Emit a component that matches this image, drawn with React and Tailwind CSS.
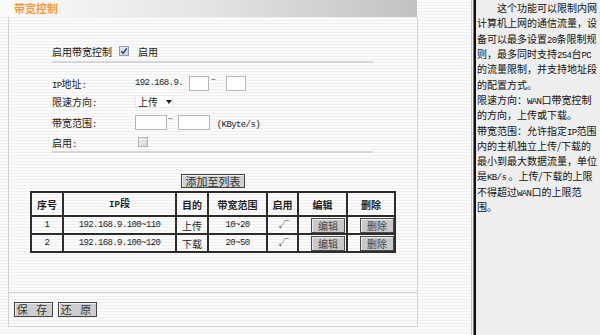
const M = ({ children }) => (
  <span className="font-['Liberation_Mono',monospace] text-[9px] leading-none tracking-[-0.6px]">{children}</span>
);

const stripes =
  'bg-[repeating-linear-gradient(180deg,#fbfbfb_0px,#fbfbfb_2px,#efefef_2px,#efefef_3px)]';

function Box({ wide }) {
  return (
    <div
      className={`h-[15px] border border-[#b4b4b4] bg-white ${wide ? 'w-[32px]' : 'w-[20px]'}`}
    />
  );
}

function Tilde() {
  return (
    <span className="self-start font-['Liberation_Mono',monospace] text-[8px] leading-[8px] text-[#333]">~</span>
  );
}

function CheckBox({ checked }) {
  if (checked) {
    return (
      <div className="flex h-[10px] w-[10px] items-center justify-center border border-[#8c9db5] bg-gradient-to-br from-[#eef2f8] to-[#c3cfe0]">
        <svg width="8" height="8" viewBox="0 0 8 8">
          <path d="M1.2 4.2 L3.2 6.2 L6.8 1.4" fill="none" stroke="#25337a" strokeWidth="1.4" />
        </svg>
      </div>
    );
  }
  return <div className="h-[10px] w-[10px] border border-[#b0b0b0] bg-gradient-to-br from-[#f2f2f2] to-[#d6d6d6]" />;
}

function SmallBtn({ children }) {
  return (
    <div className="flex h-[15px] w-[34px] items-center justify-center border border-[#4a4a4a] bg-[#c9c9c9] text-[10px] text-[#444] shadow-[inset_1px_1px_0_#ececec]">
      {children}
    </div>
  );
}

const COLS = ['w-[30px]', 'w-[113px] border-l-2', 'w-[32px] border-l-2', 'w-[59px] border-l-2', 'w-[31px] border-l-2', 'w-[49px] border-l-2', 'w-[48px] border-l-2'];

const ROWS = [
  { no: '1', ip: '192.168.9.100~110', dir: '上传', bw: '10~20' },
  { no: '2', ip: '192.168.9.100~120', dir: '下载', bw: '20~50' },
];

function RuleTable() {
  const head = ['序号', 'IP段', '目的', '带宽范围', '启用', '编辑', '删除'];
  return (
    <div className="w-[366px] border-2 border-[#2c2c2c] text-[10px] text-[#222]">
      <div className="flex h-[22px]">
        {head.map((h, i) => (
          <div key={h} className={`flex items-center justify-center border-[#2c2c2c] font-bold ${COLS[i]}`}>
            {h === 'IP段' ? (
              <span>
                <span className="font-['Liberation_Mono',monospace] text-[9px] font-bold">IP</span>段
              </span>
            ) : (
              h
            )}
          </div>
        ))}
      </div>
      {ROWS.map((r) => (
        <div key={r.no} className="flex h-[18px] border-t-2 border-[#2c2c2c]">
          <div className={`flex items-center justify-center border-[#2c2c2c] ${COLS[0]}`}><M>{r.no}</M></div>
          <div className={`flex items-center justify-center border-[#2c2c2c] ${COLS[1]}`}><M>{r.ip}</M></div>
          <div className={`flex items-center justify-center border-[#2c2c2c] ${COLS[2]}`}>{r.dir}</div>
          <div className={`flex items-center justify-center border-[#2c2c2c] ${COLS[3]}`}><M>{r.bw}</M></div>
          <div className={`flex items-center justify-center border-[#2c2c2c] text-[9px] italic text-[#444] ${COLS[4]}`}>√</div>
          <div className={`flex items-center justify-end pr-[1px] border-[#2c2c2c] ${COLS[5]}`}><SmallBtn>编辑</SmallBtn></div>
          <div className={`flex items-center justify-end pr-[0px] border-[#2c2c2c] ${COLS[6]}`}><SmallBtn>删除</SmallBtn></div>
        </div>
      ))}
    </div>
  );
}

function Label({ children }) {
  return <div className="w-[83px] shrink-0">{children}</div>;
}

const HELP = [
  '\u3000\u3000这个功能可以限制内网',
  '计算机上网的通信流量，设',
  <>备可以最多设置<M>20</M>条限制规</>,
  <>则，最多同时支持<M>254</M>台<M>PC</M></>,
  '的流量限制，并支持地址段',
  '的配置方式。',
  <>限速方向：<M>WAN</M>口带宽控制</>,
  '的方向，上传或下载。',
  <>带宽范围：允许指定<M>IP</M>范围</>,
  '内的主机独立上传/下载的',
  '最小到最大数据流量，单位',
  <>是<M>KB/s</M> 。上传/下载的上限</>,
  <>不得超过<M>WAN</M>口的上限范</>,
  '围。',
];

export default function App() {
  return (
    <div className="flex h-[335px] w-[600px] overflow-hidden font-['Noto_Sans_CJK_SC',sans-serif] text-[10px] text-[#222]">
      {/* main area */}
      <div className={`flex w-[471px] shrink-0 flex-col ${stripes}`}>
        <div className="flex h-[17px] w-[417px] items-center bg-gradient-to-r from-[#fbfbfb] via-[#e4e4e4] to-[#c2c2c2] pl-[14px]">
          <span className="text-[11px] font-bold text-[#f29a3a]">带宽控制</span>
        </div>

        <div className="ml-[8px] flex h-[310px] w-[410px] flex-col border-x border-b border-[#d2d2d2]">
          <div className="pl-[43px]">
            <div className="mt-[27px] flex h-[14px] items-center">
              <span>启用带宽控制</span>
              <div className="ml-[7px] mr-[9px]"><CheckBox checked /></div>
              <span>启用</span>
            </div>
            <div className="mt-[3px] h-[2px] w-[321px] bg-[#d6d6d6]" />

            <div className="mt-[12px] flex h-[16px] items-center">
              <Label><M>IP</M>地址<M>:</M></Label>
              <M>192.168.9.</M>
              <div className="ml-[6px] flex items-center gap-[2px]">
                <Box />
                <Tilde />
                <div className="ml-[8px]"><Box /></div>
              </div>
            </div>

            <div className="mt-[3px] flex h-[15px] items-center">
              <Label>限速方向<M>:</M></Label>
              <div className="flex h-[13px] w-[38px] items-center border border-[#e6e6e6] bg-white pl-[2px]">
                <span>上传</span>
                <svg className="ml-[8px]" width="6" height="4" viewBox="0 0 6 4">
                  <path d="M0 0 L6 0 L3 4 Z" fill="#222" />
                </svg>
              </div>
            </div>

            <div className="mt-[6px] flex h-[15px] items-center">
              <Label>带宽范围<M>:</M></Label>
              <Box wide />
              <span className="ml-[1px] self-start font-['Liberation_Mono',monospace] text-[8px] leading-[8px] text-[#333]">~</span>
              <div className="ml-[5px]"><Box wide /></div>
              <span className="ml-[7px]"><M>(KByte/s)</M></span>
            </div>

            <div className="mt-[5px] flex h-[14px] items-center">
              <Label>启用<M>:</M></Label>
              <div className="ml-[3px]"><CheckBox /></div>
            </div>
            <div className="mt-[2px] h-[2px] w-[321px] bg-[#d6d6d6]" />
          </div>

          <div className="ml-[21px] flex w-[366px] flex-col items-center">
            <div className="mt-[21px] flex h-[14px] w-[64px] items-center justify-center border border-[#444] bg-[#d0d0d0] text-[11px] text-[#333] shadow-[inset_1px_1px_0_#eee]">
              添加至列表
            </div>
            <div className="mt-[3px]">
              <RuleTable />
            </div>
          </div>

          <div className="mt-[39px] h-[1px] w-full bg-[#d4d4d4]" />
          <div className="ml-[5px] mt-[9px] flex gap-[5px]">
            <div className="flex h-[15px] w-[39px] items-center justify-center border border-[#444] bg-[#cecece] text-[11px] tracking-[3px] text-[#333] shadow-[inset_1px_1px_0_#eee]">保 存</div>
            <div className="flex h-[15px] w-[39px] items-center justify-center border border-[#444] bg-[#cecece] text-[11px] tracking-[3px] text-[#333] shadow-[inset_1px_1px_0_#eee]">还 原</div>
          </div>
        </div>
      </div>

      {/* divider */}
      <div className="w-[1px] shrink-0 bg-[#c4c4c4]" />
      <div className="w-[1px] shrink-0 bg-[#f2f2f2]" />
      <div className="w-[1px] shrink-0 bg-[#7a7a7a]" />
      <div className="w-[2px] shrink-0 bg-[#111]" />

      {/* help panel */}
      <div className="w-[124px] shrink-0 bg-[#eeeeee] pl-[1px] text-[10px] text-[#111]">
        {HELP.map((line, i) => (
          <div key={i} className="flex h-[15.3px] items-center whitespace-nowrap">
            <span>{line}</span>
          </div>
        ))}
      </div>
    </div>
  );
}
